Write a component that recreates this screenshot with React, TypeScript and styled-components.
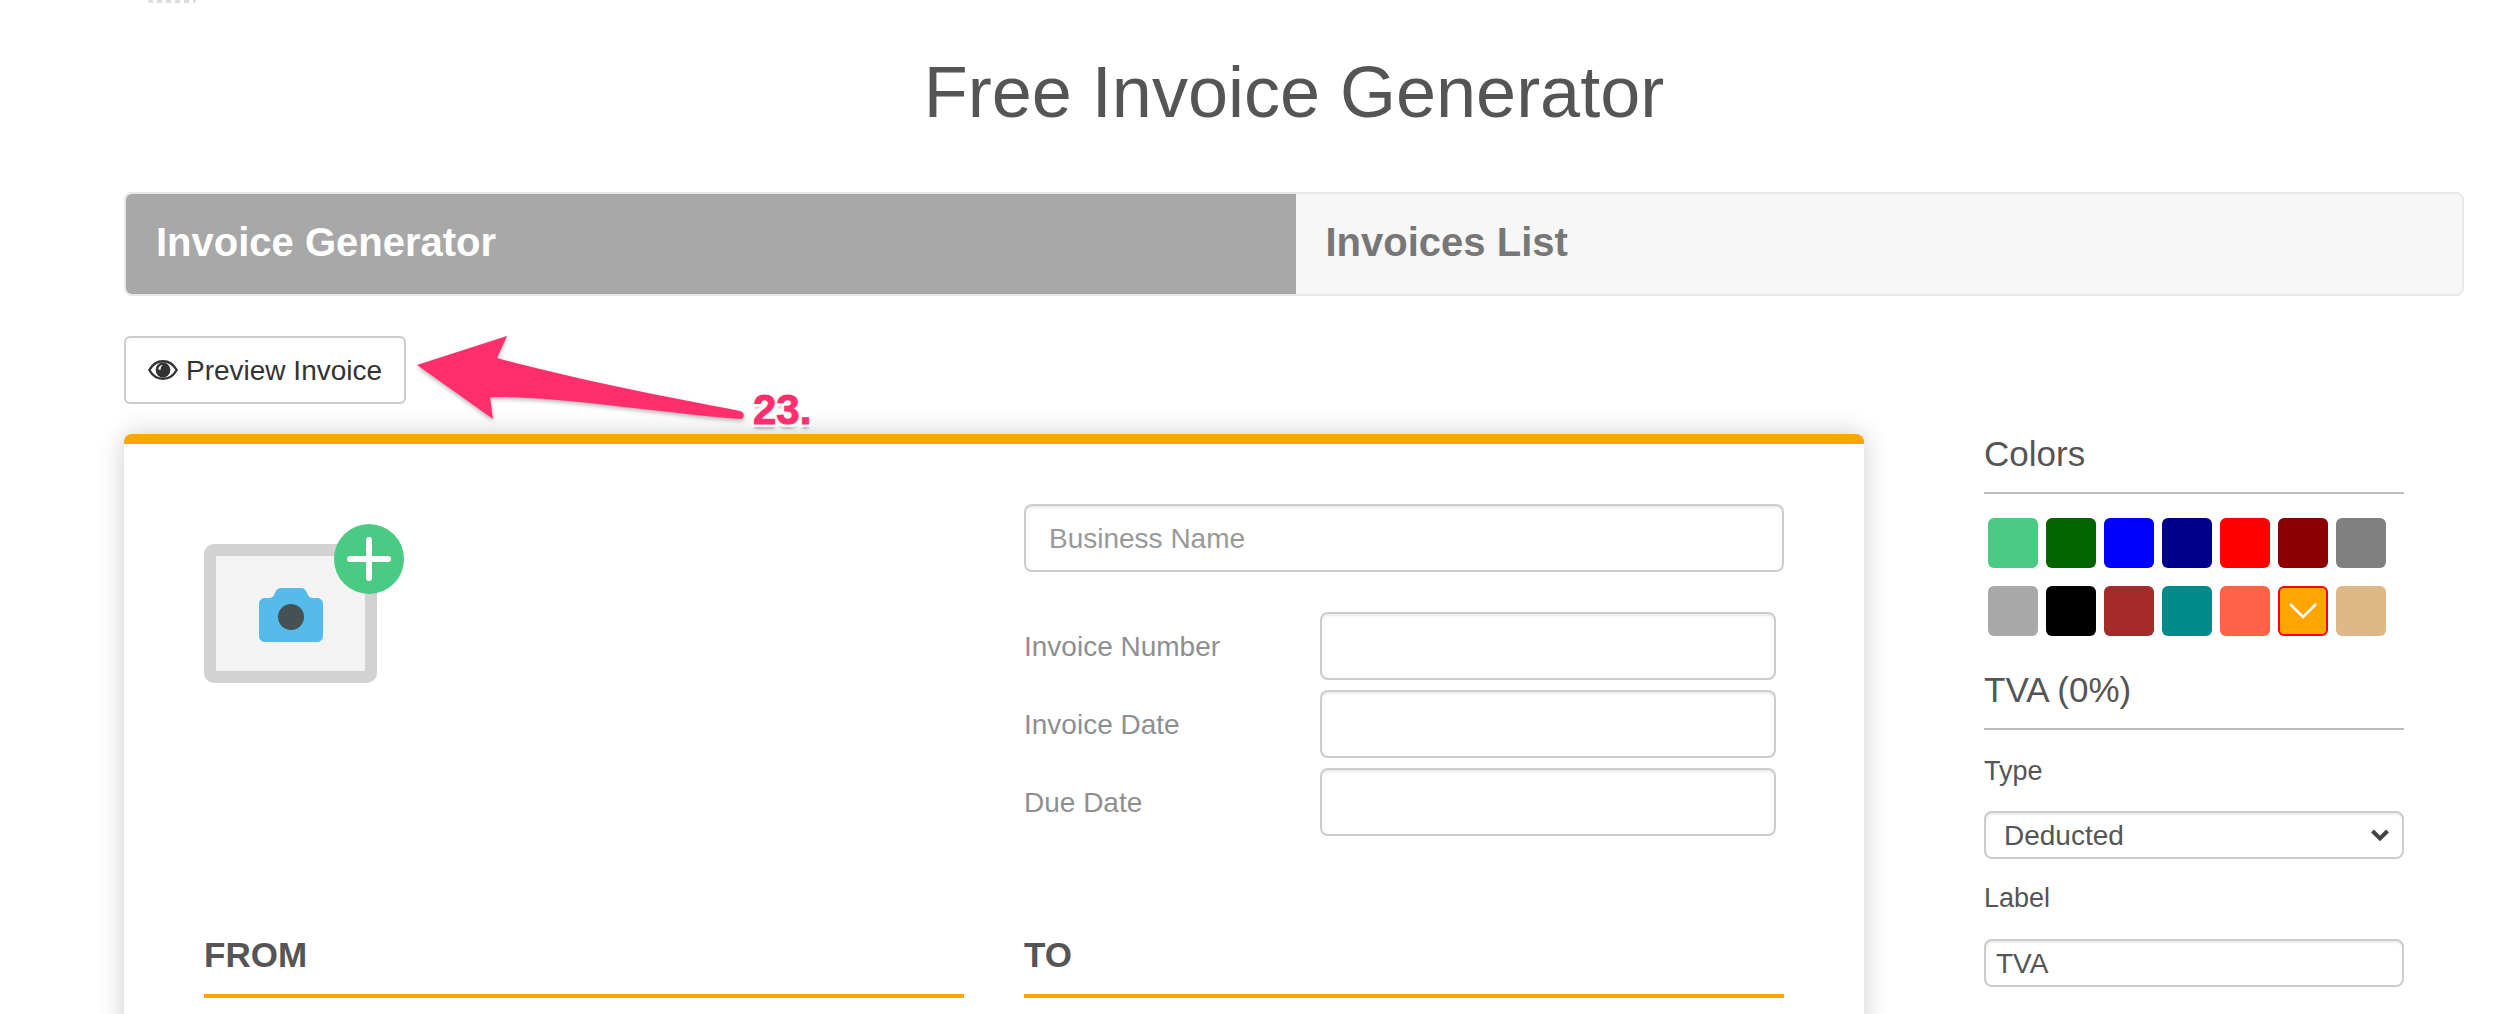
import React from 'react';
import styled, { createGlobalStyle } from 'styled-components';

const GlobalStyle = createGlobalStyle`
    html, body {
        margin: 0;
        background: #fff;
        overflow: hidden;
        height: 1014px;
    }
    * {
        box-sizing: border-box;
    }
`;

const Page = styled.div`
    position: relative;
    width: 2504px;
    height: 1014px;
    overflow: hidden;
    padding: 45px 40px 0 124px;
    font-family: 'Liberation Sans', Arial, sans-serif;
    color: #555;
`;

const Title = styled.h1`
    margin: 0 0 52px;
    height: 95px;
    line-height: 95px;
    font-size: 72px;
    font-weight: 400;
    text-align: center;
    color: #555;
`;

const Tabs = styled.div`
    display: flex;
    height: 104px;
    border: 2px solid #e8e8e8;
    border-radius: 8px;
    overflow: hidden;
`;

const Tab = styled.div<{ active?: boolean }>`
    display: flex;
    align-items: center;
    width: ${props => (props.active ? '1170px' : '1167px')};
    padding: 0 0 3px 30px;
    font-size: 40px;
    font-weight: 700;
    background: ${props => (props.active ? '#a8a8a8' : '#f7f7f7')};
    color: ${props => (props.active ? '#fff' : '#777')};
`;

const PreviewButton = styled.button`
    display: flex;
    align-items: center;
    gap: 8px;
    width: 282px;
    height: 68px;
    margin-top: 40px;
    padding: 0 0 0 22px;
    border: 2px solid #ccc;
    border-radius: 6px;
    background: #fff;
    font-family: inherit;
    font-size: 28px;
    color: #333;
`;

const PreviewLabel = styled.span`
    padding-top: 1px;
`;

const Columns = styled.div`
    display: flex;
    margin-top: 30px;
`;

const Card = styled.div`
    width: 1740px;
    height: 620px;
    flex: none;
    border-top: 10px solid #ffa500;
    border-radius: 8px 8px 0 0;
    padding: 60px 80px 0;
    background: #fff;
    box-shadow: 0 0 26px rgba(0, 0, 0, 0.2);
`;

const CardTop = styled.div`
    display: flex;
    justify-content: space-between;
`;

const LogoUpload = styled.div`
    position: relative;
    width: 173px;
    height: 139px;
    margin-top: 40px;
    padding-top: 3px;
    display: flex;
    align-items: center;
    justify-content: center;
    background: #f3f3f3;
    border: 12px solid #d2d2d2;
    border-radius: 10px;
`;

const AddBadge = styled.div`
    position: absolute;
    top: -32px;
    right: -39px;
    width: 70px;
    height: 70px;
    border-radius: 50%;
    background: #4aca82;
    display: flex;
    align-items: center;
    justify-content: center;
`;

const BusinessBlock = styled.div`
    width: 760px;
`;

const textField = `
    display: block;
    background: #fff;
    border: 2px solid #ccc;
    border-radius: 8px;
    box-shadow: inset 0 2px 2px rgba(0, 0, 0, 0.075);
    font-family: inherit;
    color: #555;
    outline: none;
`;

const BusinessInput = styled.input`
    ${textField}
    width: 100%;
    height: 68px;
    padding: 2px 23px 0;
    font-size: 28px;
    &::placeholder {
        color: #999;
        opacity: 1;
    }
`;

const MetaRows = styled.div`
    display: flex;
    flex-direction: column;
    gap: 10px;
    margin-top: 40px;
`;

const MetaRow = styled.label`
    display: flex;
    align-items: center;
    justify-content: space-between;
    width: 752px;
    font-size: 28px;
    color: #8f8f8f;
`;

const MetaLabel = styled.span`
    padding-top: 2px;
`;

const MetaInput = styled.input`
    ${textField}
    width: 456px;
    height: 68px;
`;

const Parties = styled.div`
    display: flex;
    justify-content: space-between;
    margin-top: 90px;
`;

const Party = styled.div`
    width: 760px;
`;

const PartyTitle = styled.h3`
    margin: 0;
    height: 72px;
    line-height: 58px;
    padding-bottom: 10px;
    border-bottom: 4px solid #ffa500;
    font-size: 35px;
    font-weight: 700;
    color: #555;
`;

const Sidebar = styled.aside`
    width: 420px;
    margin-left: 120px;
`;

const SideHeading = styled.h4`
    margin: 0;
    height: 60px;
    line-height: 40px;
    font-size: 35px;
    font-weight: 400;
    color: #555;
    border-bottom: 2px solid #bbb;
`;

const Swatches = styled.div`
    display: grid;
    grid-template-columns: repeat(7, 50px);
    gap: 18px 8px;
    margin: 24px 0 0 4px;
`;

const Swatch = styled.div<{ color: string; selected?: boolean }>`
    width: 50px;
    height: 50px;
    display: flex;
    align-items: center;
    justify-content: center;
    border-radius: 6px;
    background: ${props => props.color};
    border: ${props => (props.selected ? '2px solid #f00' : 'none')};
`;

const TvaHeading = styled(SideHeading)`
    margin-top: 34px;
`;

const FieldLabel = styled.label`
    display: block;
    height: 36px;
    line-height: 36px;
    font-size: 27px;
    color: #555;
`;

const TypeLabel = styled(FieldLabel)`
    margin-top: 23px;
`;

const SelectBox = styled.div`
    ${textField}
    display: flex;
    align-items: center;
    justify-content: space-between;
    width: 420px;
    height: 48px;
    margin: 22px 0 21px;
    padding: 0 12px 0 18px;
    font-size: 28px;
`;

const SelectValue = styled.span`
    padding-top: 2px;
`;

const TvaInput = styled.input`
    ${textField}
    width: 420px;
    height: 48px;
    margin-top: 23px;
    padding: 2px 10px 0;
    font-size: 28px;
`;

const Annotation = styled.div`
    position: absolute;
    left: 753px;
    top: 387px;
    font-size: 42px;
    line-height: 46px;
    font-weight: 700;
    color: #ff2f6e;
    -webkit-text-stroke: 1px #ff2f6e;
    text-shadow:
        3px 0 #fff, -3px 0 #fff, 0 3px #fff, 0 -3px #fff,
        3px 3px #fff, -3px 3px #fff, 3px -3px #fff, -3px -3px #fff,
        0 5px 3px rgba(0, 0, 0, 0.25);
`;

const ArrowSvg = styled.svg`
    position: absolute;
    left: 400px;
    top: 320px;
    filter: drop-shadow(0 2px 2px rgba(0, 0, 0, 0.3));
`;

const CutOffMark = styled.div`
    position: absolute;
    left: 148px;
    top: -3px;
    width: 48px;
    height: 6px;
    border-radius: 3px;
    background: repeating-linear-gradient(90deg, #aaa 0 5px, #fff 5px 9px);
    opacity: 0.4;
`;

const EyeIcon = () => (
    <svg width="30" height="20" viewBox="0 0 30 20" fill="none">
        <path
            d="M1.3 10C4.6 4.2 9.4 1.2 15 1.2S25.4 4.2 28.7 10C25.4 15.8 20.6 18.8 15 18.8S4.6 15.8 1.3 10Z"
            stroke="#333"
            strokeWidth="2.4"
        />
        <circle cx="15" cy="10" r="7.4" fill="#333" />
        <path d="M10.4 9.6C10.4 7 12.4 4.9 15 4.8C13.2 6.2 12.4 7.8 12.6 10Z" fill="#fff" />
    </svg>
);

const CameraIcon = () => (
    <svg width="64" height="54" viewBox="0 0 64 54">
        <path
            d="M6 10H10C13 10 14.5 8.5 15.5 6L16.5 4C17.7 1.5 19.5 0 22 0H42C44.5 0 46.3 1.5 47.5 4L48.5 6C49.5 8.5 51 10 54 10H58C61.5 10 64 12.5 64 16V48C64 51.5 61.5 54 58 54H6C2.5 54 0 51.5 0 48V16C0 12.5 2.5 10 6 10Z"
            fill="#55bbeb"
        />
        <circle cx="32" cy="29" r="13" fill="#445254" />
    </svg>
);

const PlusIcon = () => (
    <svg width="44" height="44" viewBox="0 0 44 44">
        <path d="M3 22H41M22 3V41" stroke="#fff" strokeWidth="6" strokeLinecap="round" />
    </svg>
);

const CheckMark = () => (
    <svg width="30" height="18" viewBox="0 0 30 18" fill="none">
        <path d="M2 2L15 15L28 2" stroke="#fff" strokeWidth="2.6" />
    </svg>
);

const SelectChevron = () => (
    <svg width="20" height="14" viewBox="0 0 20 14" fill="none">
        <path d="M2.5 3L10 10.5L17.5 3" stroke="#444" strokeWidth="4" />
    </svg>
);

const swatchColors = [
    '#4aca82', '#006400', '#0000ff', '#00008b', '#ff0000', '#8b0000', '#808080',
    '#a9a9a9', '#000000', '#a52a2a', '#008b8b', '#ff6347', '#ffa500', '#deb887',
];

const App = () => (
    <Page>
        <GlobalStyle />
        <CutOffMark />
        <Title>Free Invoice Generator</Title>
        <Tabs>
            <Tab active>Invoice Generator</Tab>
            <Tab>Invoices List</Tab>
        </Tabs>
        <PreviewButton>
            <EyeIcon />
            <PreviewLabel>Preview Invoice</PreviewLabel>
        </PreviewButton>
        <Columns>
            <Card>
                <CardTop>
                    <LogoUpload>
                        <CameraIcon />
                        <AddBadge>
                            <PlusIcon />
                        </AddBadge>
                    </LogoUpload>
                    <BusinessBlock>
                        <BusinessInput placeholder="Business Name" />
                        <MetaRows>
                            <MetaRow>
                                <MetaLabel>Invoice Number</MetaLabel>
                                <MetaInput />
                            </MetaRow>
                            <MetaRow>
                                <MetaLabel>Invoice Date</MetaLabel>
                                <MetaInput />
                            </MetaRow>
                            <MetaRow>
                                <MetaLabel>Due Date</MetaLabel>
                                <MetaInput />
                            </MetaRow>
                        </MetaRows>
                    </BusinessBlock>
                </CardTop>
                <Parties>
                    <Party>
                        <PartyTitle>FROM</PartyTitle>
                    </Party>
                    <Party>
                        <PartyTitle>TO</PartyTitle>
                    </Party>
                </Parties>
            </Card>
            <Sidebar>
                <SideHeading>Colors</SideHeading>
                <Swatches>
                    {swatchColors.map(color => (
                        <Swatch key={color} color={color} selected={color === '#ffa500'}>
                            {color === '#ffa500' && <CheckMark />}
                        </Swatch>
                    ))}
                </Swatches>
                <TvaHeading>TVA (0%)</TvaHeading>
                <TypeLabel>Type</TypeLabel>
                <SelectBox>
                    <SelectValue>Deducted</SelectValue>
                    <SelectChevron />
                </SelectBox>
                <FieldLabel>Label</FieldLabel>
                <TvaInput defaultValue="TVA" />
            </Sidebar>
        </Columns>
        <ArrowSvg width="360" height="110" viewBox="400 320 360 110">
            <path
                d="M417 365L507 336L497 358C570 378 660 396 740 411C745 412 745 419 740 419C660 413 560 396 490 397L493 419Z"
                fill="#ff2f6e"
            />
        </ArrowSvg>
        <Annotation>23.</Annotation>
    </Page>
);

export default App;
